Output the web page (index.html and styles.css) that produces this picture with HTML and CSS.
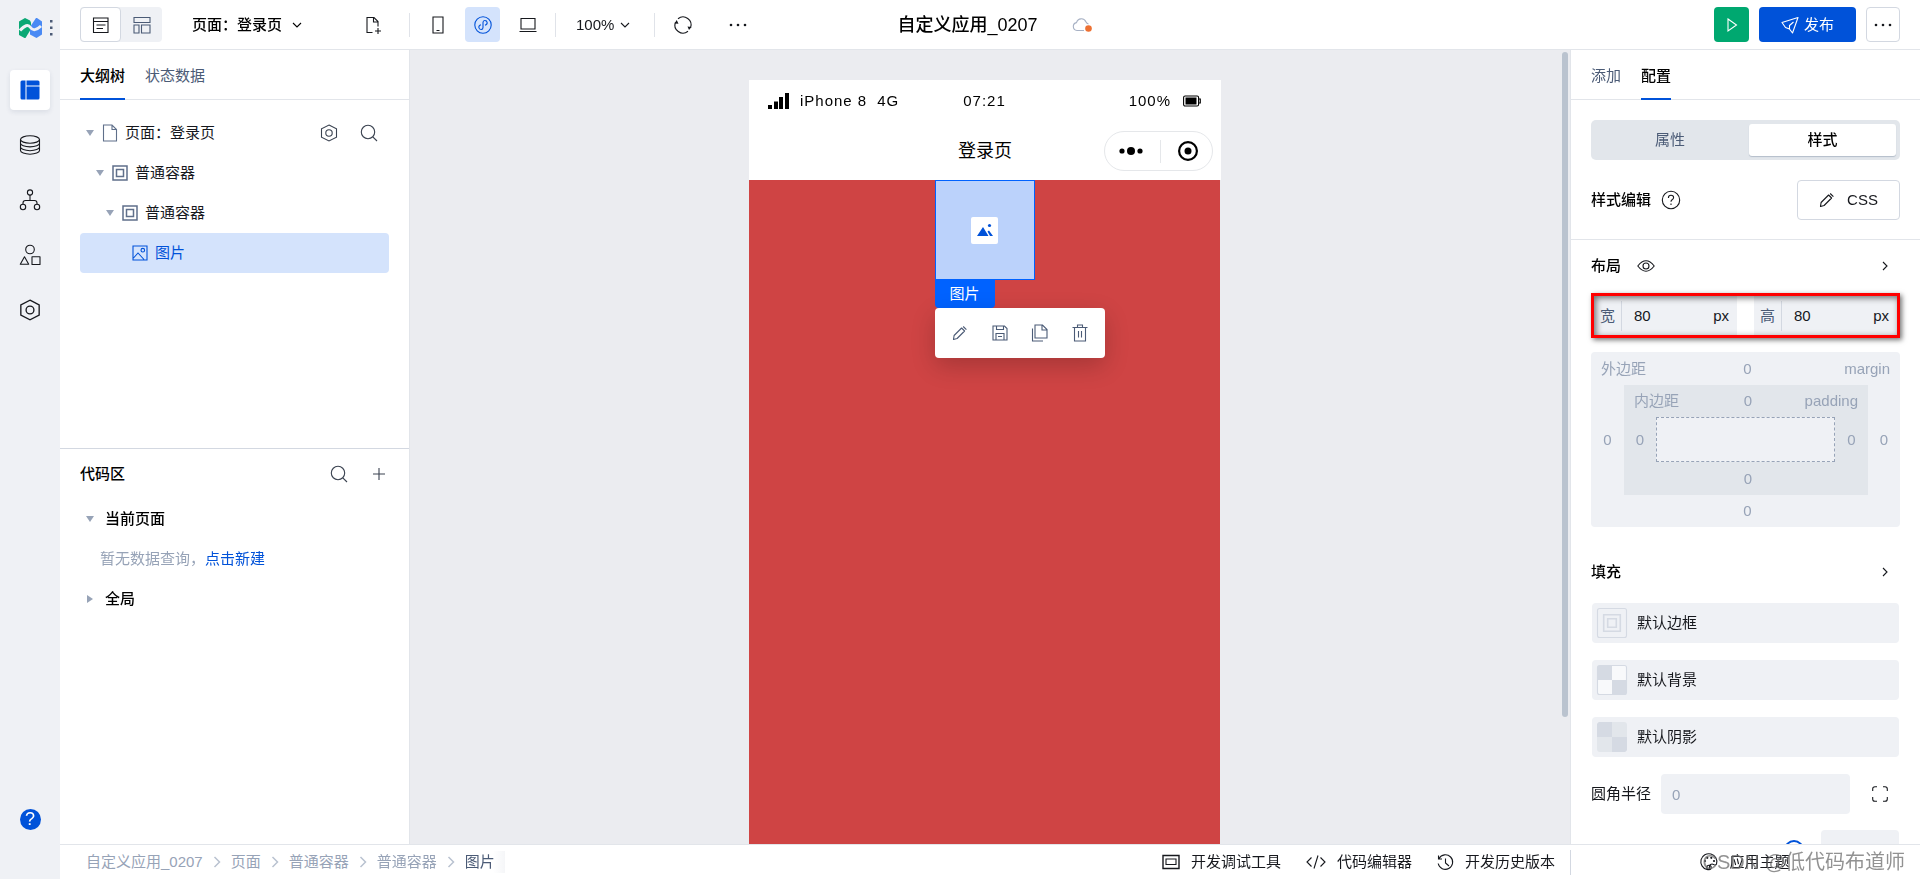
FILE: index.html
```html
<!DOCTYPE html>
<html lang="zh-CN">
<head>
<meta charset="utf-8">
<title>自定义应用_0207</title>
<meta name="viewport" content="width=device-width, initial-scale=1">
<link rel="stylesheet" href="styles.css">
</head>
<body>
<svg class="sprite" aria-hidden="true">
  <symbol id="i-search" viewBox="0 0 18 18"><circle cx="8" cy="8" r="6.700"/><path d="M12.800 12.800 17 17"/></symbol>
  <symbol id="i-hex" viewBox="0 0 18 18"><path d="M9 1 16.500 4.800v8.400L9 17 1.500 13.200V4.800z"/><circle cx="9" cy="9" r="3.200"/></symbol>
  <symbol id="i-down" viewBox="0 0 10 10"><path d="M1 3l4 4 4-4"/></symbol>
  <symbol id="i-right" viewBox="0 0 10 10"><path d="M3 1l4 4-4 4"/></symbol>
  <symbol id="i-crumb" viewBox="0 0 8 12"><path d="M1.500 1l5 5-5 5" stroke-width="1.500"/></symbol>
  <symbol id="i-box" viewBox="0 0 16 16"><path d="M1 1h14v14H1zM4.500 4.500h7v7h-7z" stroke-width="1.500"/></symbol>
  <symbol id="i-edit" viewBox="0 0 16 16"><path d="M1.500 14.500l.6-4L9.600 3l3 3-7.500 7.500zM11.200 1.500l3.200 3.200" stroke-linejoin="round"/></symbol>
  <symbol id="i-dots" viewBox="0 0 18 4"><g fill="currentColor" stroke="none"><circle cx="2" cy="2" r="1.300"/><circle cx="9" cy="2" r="1.300"/><circle cx="16" cy="2" r="1.300"/></g></symbol>
</svg>
<div class="app">
  <nav class="rail" aria-label="主导航">
    <div class="brand">
      <svg width="23" height="20" viewBox="0 0 23 20"><path fill="#0aa874" stroke="none" d="M0 3.500 6 0l5 2.500 1 2V11L6.500 20H5.500L0 17z"/><path fill="#4a8af4" stroke="none" d="M17 0h1l5 3.500v13L17.500 20 11 16.500V9z"/><path stroke="#eff1f5" stroke-width="3" d="M1 12.500Q8 4.500 11.500 9.500T22 8"/></svg>
      <svg width="3" height="16" viewBox="0 0 3 16"><path fill="#4b5b76" stroke="none" d="M0 0h2.500v2.500H0zM0 6.500h2.500V9H0zM0 13h2.500v2.500H0z"/></svg>
    </div>
    <button class="rail-btn is-active" aria-label="页面设计"><svg width="20" height="20" viewBox="0 0 20 20"><path fill="#0052d9" stroke="none" d="M2 .5h3.500v19H2a1.500 1.500 0 0 1-1.500-1.500V2A1.500 1.500 0 0 1 2 .5zM6.500.5H18A1.500 1.500 0 0 1 19.500 2v3.500h-13zM6.500 6.500h13V18a1.500 1.500 0 0 1-1.500 1.500H6.500z"/></svg></button>
    <button class="rail-btn" aria-label="数据源"><svg width="22" height="22" viewBox="0 0 22 22"><ellipse cx="11" cy="5.500" rx="9.500" ry="3.700"/><path d="M1.500 5.500v11c0 2 4.200 3.700 9.500 3.700s9.500-1.700 9.500-3.700v-11M1.500 9.200c0 2 4.200 3.700 9.500 3.700s9.500-1.700 9.500-3.700M1.500 13c0 2 4.200 3.700 9.500 3.700s9.500-1.700 9.500-3.700"/></svg></button>
    <button class="rail-btn" aria-label="流程"><svg width="22" height="22" viewBox="0 0 22 22"><circle cx="11" cy="3.500" r="2.600"/><circle cx="4" cy="18" r="2.700"/><circle cx="18" cy="18" r="2.700"/><path d="M11 6v5.500M4 15.300v-1.300q0-2.500 2.500-2.500h9q2.500 0 2.500 2.500v1.300"/></svg></button>
    <button class="rail-btn" aria-label="组件"><svg width="22" height="22" viewBox="0 0 22 22"><circle cx="11" cy="5.500" r="4.300"/><path d="M5.500 12.800 9.700 20.300H1.300zM13 12.800h8v7.700h-8z" stroke-linejoin="round"/></svg></button>
    <button class="rail-btn" aria-label="设置"><svg width="22" height="22" viewBox="0 0 18 18"><use href="#i-hex"/></svg></button>
    <button class="help" aria-label="帮助">?</button>
  </nav>
  <div class="main">
    <header class="topbar">
      <div class="top-left">
        <div class="views">
          <button class="view is-active" aria-label="编辑视图"><svg width="18" height="18" viewBox="0 0 18 18"><path d="M1.500 2h14.500v14.500H1.500zM1.500 5.500h14.500M4.500 9h9M4.500 12.500h6.500"/></svg></button>
          <button class="view" aria-label="布局视图"><svg width="18" height="18" viewBox="0 0 18 18"><path d="M1 1.500h16v5H1zM1 9h5v8H1zM8.500 9H17v8H8.500z"/></svg></button>
        </div>
        <button class="page-pick">页面：登录页<svg width="10" height="10"><use href="#i-down"/></svg></button>
        <button class="icon-btn new-page" aria-label="新建页面"><svg width="17" height="18" viewBox="0 0 17 18"><path d="M7.500 16.500H2v-15h7l4 4v5M8.500 1.500V6H13M13 12v6M10 15h6"/></svg></button>
        <span class="sep"></span>
        <button class="icon-btn" aria-label="手机"><svg width="12" height="18" viewBox="0 0 12 18"><path d="M1 1h10v16H1zM4.500 14.500h3"/></svg></button>
        <button class="icon-btn is-active" aria-label="小程序"><svg width="18" height="18" viewBox="0 0 18 18"><circle cx="9" cy="9" r="8.200"/><path d="M11 9.200c3.300-.9 2.500-4.700-.2-4.700-1.200 0-1.800.9-1.800 2v5c0 1.100-.6 2-1.800 2-2.700 0-3.500-3.800-.2-4.700"/></svg></button>
        <button class="icon-btn" aria-label="电脑"><svg width="18" height="16" viewBox="0 0 18 16"><path d="M2 1.500h14v10.500H2zM.5 14.500h17"/></svg></button>
        <span class="sep sep-a"></span>
        <button class="zoom">100%<svg width="10" height="10"><use href="#i-down"/></svg></button>
        <span class="sep"></span>
        <button class="icon-btn" aria-label="刷新"><svg width="20" height="20" viewBox="0 0 20 20"><path d="M5 3.700A8 8 0 0 1 17.500 12.800M15 16.300A8 8 0 0 1 2.500 7.200"/><path fill="currentColor" stroke="none" d="M1.500 8.500 3.700 5l1.800 3.800zM14.500 11.500l4 .5-2.500 3z"/></svg></button>
        <button class="icon-btn overflow" aria-label="更多"><svg width="18" height="4"><use href="#i-dots"/></svg></button>
      </div>
      <div class="top-title"><h1>自定义应用_0207</h1><svg width="21" height="16" viewBox="0 0 21 16"><path d="M12 13.500H5A4 4 0 0 1 4.500 5.600 5 5 0 0 1 14 5" stroke="#a7b1c4"/><path d="M14 5q.7 1.500 2.500 2" stroke="#a7b1c4"/><circle cx="16.500" cy="11.500" r="3.300" fill="#ed7133" stroke="none"/></svg></div>
      <div class="top-right">
        <button class="run" aria-label="预览"><svg width="14" height="16" viewBox="0 0 14 16"><path d="M3 2l8.500 6L3 14z"/></svg></button>
        <button class="publish"><svg width="18" height="18" viewBox="0 0 18 18"><path d="M1 6.500 17 1.500 11.500 17 8.500 13 4.500 11.500zM8.500 13v-3.500l4-3.500" stroke-linejoin="round"/></svg>发布</button>
        <button class="more" aria-label="更多操作"><svg width="18" height="4"><use href="#i-dots"/></svg></button>
      </div>
    </header>
    <div class="work">
      <aside class="side">
        <section class="outline">
          <div class="tabs"><button class="tab is-active">大纲树</button><button class="tab">状态数据</button></div>
          <ul class="tree">
            <li class="node"><i class="caret"></i><svg class="slate" width="16" height="18" viewBox="0 0 16 18"><path d="M1.500 1h8.500L14.500 5.500V17h-13zM10 1v4.500h4.500"/></svg><span>页面：登录页</span>
              <button class="tool" aria-label="页面设置"><svg width="18" height="18"><use href="#i-hex"/></svg></button><button class="tool" aria-label="搜索"><svg width="18" height="18"><use href="#i-search"/></svg></button></li>
            <li class="node lv1"><i class="caret"></i><svg class="slate" width="16" height="16"><use href="#i-box"/></svg><span>普通容器</span></li>
            <li class="node lv2"><i class="caret"></i><svg class="slate" width="16" height="16"><use href="#i-box"/></svg><span>普通容器</span></li>
            <li class="node lv3 is-active"><i class="caret blank"></i><svg width="16" height="16" viewBox="0 0 16 16"><path d="M1 1h14v14H1zM1.500 13 6 8l6 6.500"/><circle cx="10.800" cy="5.200" r="1.800"/></svg><span>图片</span></li>
          </ul>
        </section>
        <section class="code">
          <div class="code-head"><h2>代码区</h2><button class="tool" aria-label="搜索代码"><svg width="18" height="18"><use href="#i-search"/></svg></button><button class="tool" aria-label="新建"><svg width="12" height="12" viewBox="0 0 12 12"><path d="M6 0v12M0 6h12"/></svg></button></div>
          <div class="code-row"><i class="caret"></i><b>当前页面</b></div>
          <p class="empty">暂无数据查询，<a href="#new">点击新建</a></p>
          <div class="code-row"><i class="caret closed"></i><b>全局</b></div>
        </section>
      </aside>
      <main class="canvas">
        <div class="phone">
          <div class="status"><div class="carrier"><svg width="22" height="16" viewBox="0 0 22 16"><path fill="currentColor" stroke="none" d="M0 12h4v4H0zM6 8.500h4V16H6zM11 4h4v12h-4zM17 0h4v16h-4z"/></svg><span>iPhone 8</span><span>4G</span></div><span>07:21</span><div class="power"><span>100%</span><svg width="18" height="12" viewBox="0 0 18 12"><rect x=".6" y="1" width="15" height="10" rx="1.500"/><path fill="currentColor" stroke="none" d="M2.500 2.500h11v7h-11z"/><path d="M16 4h1.300v4H16"/></svg></div></div>
          <div class="nav"><span>登录页</span>
            <div class="capsule"><svg width="24" height="8" viewBox="0 0 24 8"><g fill="currentColor" stroke="none"><circle cx="3" cy="4" r="2.600"/><circle cx="12" cy="4" r="4"/><circle cx="21" cy="4" r="2.600"/></g></svg><i></i><svg width="20" height="20" viewBox="0 0 20 20"><circle cx="10" cy="10" r="8.900" stroke-width="2.200"/><circle cx="10" cy="10" r="3.500" fill="currentColor" stroke="none"/></svg></div>
          </div>
          <div class="stage">
            <div class="picked">
              <span class="pic"><svg width="18" height="16" viewBox="0 0 18 16"><path fill="#0052d9" stroke="none" d="M1 14 7 5l5.500 9zM11.500 9.500l1.500-1 4 5.500h-3z"/><circle cx="13.500" cy="3.500" r="1.600" fill="#0052d9" stroke="none"/></svg></span>
              <div class="popup">
                <span class="tag">图片</span>
                <div class="actions">
                  <button aria-label="编辑"><svg width="16" height="16"><use href="#i-edit"/></svg></button>
                  <button aria-label="保存"><svg width="16" height="16" viewBox="0 0 16 16"><path d="M1 1h11.500L15 3.500V15H1zM4.500 1v3.500h7V1M4 15V8.500h8V15M6 11.500h4"/></svg></button>
                  <button aria-label="复制"><svg width="17" height="18" viewBox="0 0 17 18"><path d="M4 1h7.500L16 5.500V14H4zM11 1v5h5M1.500 4.500v12.500H12"/></svg></button>
                  <button aria-label="删除"><svg width="16" height="18" viewBox="0 0 16 18"><path d="M.5 3.500h15M2.500 3.500V17h11V3.500M5.500 3.500V1h5v2.500M6.500 7v6.500M9.500 7v6.500"/></svg></button>
                </div>
              </div>
            </div>
          </div>
        </div>
        <div class="scroll"><i></i></div>
      </main>
      <aside class="props">
        <div class="tabs"><button class="tab">添加</button><button class="tab is-active">配置</button></div>
        <div class="block">
          <div class="segment"><button>属性</button><button class="is-active">样式</button></div>
          <div class="css-row"><h2>样式编辑</h2><svg width="20" height="20" viewBox="0 0 20 20"><circle cx="10" cy="10" r="8.700"/><path d="M7.400 8q0-2.700 2.600-2.700t2.600 2.300q0 1.300-1.500 2.100-1.100.7-1.100 2M10 13.500v1.400"/></svg><button class="css-btn"><svg width="16" height="16"><use href="#i-edit"/></svg>CSS</button></div>
        </div>
        <div class="block style-block">
          <div class="title-row"><h2>布局</h2><svg width="18" height="14" viewBox="0 0 18 14"><path d="M.8 7Q9-3.500 17.200 7 9 17.500.8 7z"/><circle cx="9" cy="7" r="3"/></svg><button class="fold" aria-label="展开布局"><svg width="10" height="10"><use href="#i-right"/></svg></button></div>
          <div class="size-row">
            <div class="field"><label for="w">宽</label><input id="w" value="80"><span>px</span></div>
            <div class="field"><label for="h">高</label><input id="h" value="80"><span>px</span></div>
          </div>
          <div class="margin-box">
            <div class="edge-top"><span>外边距</span><span>0</span><span>margin</span></div>
            <span>0</span>
            <div class="padding-box">
              <div class="edge-top"><span>内边距</span><span>0</span><span>padding</span></div>
              <span>0</span><div class="content-box"></div><span>0</span>
              <span class="edge-bottom">0</span>
            </div>
            <span>0</span>
            <span class="edge-bottom">0</span>
          </div>
          <div class="title-row fill-title"><h2>填充</h2><button class="fold" aria-label="展开填充"><svg width="10" height="10"><use href="#i-right"/></svg></button></div>
          <div class="presets">
            <button class="preset"><svg width="30" height="30" viewBox="0 0 30 30"><rect x=".5" y=".5" width="29" height="29" rx="2" stroke="#d5dae3"/><path d="M6.700 6.700h16.600v16.600H6.700zM10.700 10.700h8.600v8.600h-8.600z" stroke="#d5dae3" stroke-width="1.600"/></svg>默认边框</button>
            <button class="preset"><svg width="30" height="30" viewBox="0 0 30 30"><rect x=".5" y=".5" width="29" height="29" rx="2" fill="#f8f9fb" stroke="#d5dae3"/><path d="M1 1h14v14H1zM15 15h14v14H15z" fill="#d5dae3" stroke="none"/></svg>默认背景</button>
            <button class="preset"><svg width="30" height="30" viewBox="0 0 30 30"><rect width="30" height="30" rx="3" fill="#e2e6eb" stroke="none"/><path d="M2 0h13v15H0V2zM15 15h15v13l-2 2H15z" fill="#d5dae3" stroke="none"/></svg>默认阴影</button>
          </div>
          <div class="radius-row"><label for="r">圆角半径</label><input id="r" placeholder="0"><button class="fold" aria-label="分别设置圆角"><svg width="16" height="16" viewBox="0 0 16 16"><path d="M.7 5V3Q.7.7 3 .7h2M11 .7h2q2.300 0 2.300 2.300v2M15.300 11v2q0 2.300-2.300 2.300h-2M5 15.300H3Q.7 15.300.7 13v-2"/></svg></button></div>
          <div class="opacity-row"><input type="range" aria-label="不透明度" value="100"><input type="text" aria-label="不透明度数值"></div>
        </div>
      </aside>
    </div>
    <footer class="bottom">
      <nav class="crumbs" aria-label="路径"><a href="#app">自定义应用_0207</a><svg width="8" height="12"><use href="#i-crumb"/></svg><a href="#page">页面</a><svg width="8" height="12"><use href="#i-crumb"/></svg><a href="#c1">普通容器</a><svg width="8" height="12"><use href="#i-crumb"/></svg><a href="#c2">普通容器</a><svg width="8" height="12"><use href="#i-crumb"/></svg><a class="here" href="#img">图片</a></nav>
      <div class="dev">
        <button><svg width="18" height="16" viewBox="0 0 18 16"><path d="M1 1.500h16v13H1z" stroke-width="1.400"/><path d="M4 5h10v5.500H4z"/></svg>开发调试工具</button>
        <button><svg width="20" height="14" viewBox="0 0 20 14"><path d="M5.500 2.500 1 7l4.500 4.500M14.500 2.500 19 7l-4.500 4.500M12 .5 8 13.500"/></svg>代码编辑器</button>
        <button><svg width="17" height="17" viewBox="0 0 17 17"><path d="M2 4.500A7.300 7.300 0 1 1 1.200 9.500M1.500 1.500V5H5M8.500 4.500V9l3.500 3"/></svg>开发历史版本</button>
      </div>
      <div class="theme"><button><svg width="17" height="18" viewBox="0 0 17 18"><path d="M6 16.500A8 8 0 1 1 15.500 11c-.7 1.500-2 1-3 .4-2-1-4.500.2-4 2.600.3 1.600-.5 3-2.500 2.500z"/><g fill="currentColor" stroke="none"><circle cx="4" cy="8" r="1.100"/><circle cx="6.300" cy="4.800" r="1.100"/><circle cx="10.300" cy="4.800" r="1.100"/><circle cx="13" cy="8" r="1.100"/></g><circle cx="8" cy="14.500" r="2.200"/></svg>应用主题</button><span class="mark">CSDN @低代码布道师</span></div>
    </footer>
  </div>
</div>
</body>
</html>
```
FILE: styles.css
```css
* { box-sizing: border-box; }
body {
  margin: 0;
  font: 15px/22px "Liberation Sans", "Noto Sans CJK SC", sans-serif;
  color: #16181d;
}
button, input {
  margin: 0;
  padding: 0;
  border: 0;
  background: none;
  font: inherit;
  color: inherit;
}
button { display: flex; align-items: center; justify-content: center; white-space: nowrap; }
svg { flex: none; display: block; fill: none; stroke: currentColor; stroke-width: 1.1; overflow: visible; }
h1, h2, p, ul { margin: 0; padding: 0; }
h2, b { font-size: 15px; font-weight: 500; color: #000; }
a { text-decoration: none; color: inherit; }
.sprite { position: absolute; width: 0; height: 0; }

.app { display: flex; height: 100vh; overflow: hidden; }
.rail {
  flex: none;
  width: 60px;
  background: #eff1f5;
  display: flex;
  flex-direction: column;
  align-items: center;
  gap: 15px;
  padding-bottom: 49px;
}
.brand { height: 55px; width: 100%; display: flex; align-items: center; gap: 8px; padding-left: 19px; }
.rail-btn { width: 40px; height: 40px; border-radius: 4px; }
.rail-btn.is-active { background: #fff; box-shadow: 0 2px 5px rgba(30, 50, 90, .1); }
.help { margin-top: auto; width: 21px; height: 21px; border-radius: 50%; background: #0052d9; color: #fff; font-size: 18px; line-height: 21px; }

.main { flex: 1; min-width: 0; display: flex; flex-direction: column; }
.topbar { flex: none; height: 50px; display: flex; align-items: center; border-bottom: 1px solid #e2e5ea; padding: 0 20px; background: #fff; }
.top-left, .top-right { flex: 1 1 0; display: flex; align-items: center; }
.top-right { justify-content: flex-end; gap: 10px; }
.views { display: flex; background: #eff1f5; border-radius: 4px; color: #4b5b76; }
.view { width: 41px; height: 35px; border-radius: 4px; }
.view.is-active { background: #fff; border: 1px solid #d3d8e1; color: #16181d; }
.page-pick { margin-left: 30px; gap: 10px; font-weight: 500; color: #000; }
.new-page { margin-left: 54px; }
.icon-btn { width: 35px; height: 35px; border-radius: 4px; margin-right: 10px; }
.icon-btn.is-active { background: #d4e3fc; color: #0052d9; }
.sep { width: 1px; height: 24px; margin: 0 10px; background: #e0e3e9; }
.new-page + .sep { margin-left: 8px; }
.sep-a { margin-left: 0; }
.overflow { margin-left: 10px; }
.zoom { padding: 0 14px 0 10px; gap: 6px; }
.top-title { display: flex; align-items: center; gap: 34px; padding-left: 10px; }
.top-title h1 { font-size: 18px; line-height: 26px; font-weight: 500; color: #000; }
.run { width: 35px; height: 35px; border-radius: 4px; background: #00a870; color: #fff; }
.publish { width: 97px; height: 35px; border-radius: 4px; background: #0052d9; color: #fff; gap: 5px; }
.more { width: 34px; height: 35px; border-radius: 4px; border: 1px solid #d3d8e1; }

.work { flex: 1; min-height: 0; display: flex; }
.side { flex: none; width: 350px; border-right: 1px solid #e2e5ea; display: flex; flex-direction: column; background: #fff; }
.tabs { flex: none; display: flex; gap: 20px; height: 50px; padding: 0 20px; border-bottom: 1px solid #e2e5ea; }
.tab { height: 50px; padding-top: 3px; border-bottom: 2px solid transparent; color: #4b5b76; }
.tab.is-active { border-color: #0052d9; color: #000; font-weight: 500; }
.outline { flex: 398 1 0; border-bottom: 1px solid #d3d8e1; }
.code { flex: 396 1 0; }
.tree { list-style: none; padding: 13px 20px; }
.node { height: 40px; display: flex; align-items: center; gap: 7px; padding-left: 5px; border-radius: 4px; }
.node.lv1 { padding-left: 15px; }
.node.lv2 { padding-left: 25px; }
.node.lv3 { padding-left: 35px; }
.node.is-active { background: #d4e3fc; color: #0052d9; }
.node span { margin-right: auto; }
.slate { color: #5f6f8a; }
.caret { width: 10px; display: flex; justify-content: center; }
.caret::before { content: ""; border: 4px solid transparent; border-top: 6px solid #97a3b7; border-bottom: 0; }
.caret.closed::before { border: 4px solid transparent; border-left: 6px solid #97a3b7; border-right: 0; }
.caret.blank::before { display: none; }
.tool { width: 40px; height: 40px; margin-left: -7px; color: #3a4250; }
.code-head { display: flex; align-items: center; height: 50px; padding: 0 10px 0 20px; }
.code-head h2 { margin-right: auto; }
.code-head .tool { margin-left: 0; }
.code-row { height: 40px; display: flex; align-items: center; gap: 10px; padding-left: 25px; }
.empty { padding: 9px 40px; color: #97a3b7; }
.empty a { color: #0052d9; }

.canvas { flex: 1; min-width: 0; display: flex; background: #ebecf0; padding-top: 30px; position: relative; justify-content: center; padding-right: 10px; }
.phone { width: 472px; display: flex; flex-direction: column; }
.status { height: 42px; background: #fff; color: #000; display: grid; grid-template-columns: 1fr auto 1fr; align-items: center; padding: 0 20px 0 19px; letter-spacing: 1px; }
.carrier, .power { display: flex; align-items: center; gap: 10px; }
.power { justify-content: flex-end; gap: 12px; }
.nav { height: 58px; background: #fff; display: flex; align-items: center; justify-content: center; position: relative; font-size: 18px; color: #000; }
.capsule { position: absolute; right: 8px; top: 9px; height: 40px; width: 109px; border: 1px solid #e5e7ea; border-radius: 20px; display: flex; align-items: center; justify-content: space-between; padding: 0 14px; }
.capsule i { width: 1px; height: 23px; background: #e5e7ea; }
.stage { flex: 1; margin-right: 1px; background: #cf4444; display: flex; justify-content: center; align-items: flex-start; }
.picked { position: relative; width: 100px; height: 100px; background: #bbd2fb; border: 1px solid #0062ff; display: flex; align-items: center; justify-content: center; }
.pic { width: 27px; height: 27px; border-radius: 2px; background: #fff; display: flex; align-items: center; justify-content: center; }
.popup { position: absolute; top: 99px; left: -1px; }
.tag { display: flex; align-items: center; justify-content: center; width: 60px; height: 28px; background: #0062ff; color: #fff; border-radius: 0 0 4px 4px; }
.actions { display: flex; width: 170px; height: 50px; padding: 0 5px; background: #fff; border-radius: 4px; color: #4b5b76; box-shadow: 0 8px 24px rgba(0, 0, 0, .2); }
.actions button { flex: 1; }
.scroll { position: absolute; right: 2px; top: 2px; bottom: 0; width: 6px; }
.scroll i { display: block; height: 84%; border-radius: 3px; background: #bac3cf; }

.props { flex: none; width: 350px; border-left: 1px solid #e2e5ea; background: #fff; overflow: hidden; }
.block { padding: 20px 20px 19px; border-bottom: 1px solid #e2e5ea; }
.segment { height: 40px; padding: 4px 4px 4px 0; display: grid; grid-template-columns: 158fr 147fr; background: #e2e6eb; border-radius: 5px; color: #4b5b76; }
.segment .is-active { background: #fff; color: #000; font-weight: 500; border-radius: 3px; box-shadow: 0 1px 1px #b4bdca; }
.segment button { height: 32px; }
.css-row { display: flex; align-items: center; height: 40px; gap: 10px; margin-top: 20px; }
.css-btn { margin-left: auto; height: 40px; width: 103px; gap: 12px; border: 1px solid #d3d8e1; border-radius: 4px; }
.style-block { padding-top: 15px; border: 0; }
.title-row { display: flex; align-items: center; gap: 16px; height: 22px; }
.fold { margin-left: auto; width: 30px; height: 30px; }
.size-row { display: flex; gap: 17px; height: 45px; margin-top: 16px; border: 3px solid #f00; box-shadow: 2px 2px 5px rgba(0, 0, 0, .55), inset 2px 2px 6px rgba(0, 0, 0, .55); }
.field { flex: 1; display: flex; align-items: center; padding: 0 8px 0 6px; background: #eff1f5; mix-blend-mode: multiply; }
.field label { color: #4b5b76; padding-right: 6px; line-height: 30px; border-right: 1px solid #d3d8e1; }
.field input { flex: 1; width: 0; min-width: 0; padding-left: 12px; }
.margin-box { margin-top: 14px; display: grid; grid-template: 33px 110px 32px / 33px 1fr 32px; background: #eff1f5; border-radius: 4px; color: #97a3b7; align-items: center; justify-items: center; }
.padding-box { width: 100%; height: 100%; display: grid; grid-template: 32px 45px 33px / 32px 1fr 33px; background: #e2e6eb; align-items: center; justify-items: center; }
.edge-top { grid-column: 1 / -1; width: 100%; padding: 0 10px; display: grid; grid-template-columns: 1fr auto 1fr; }
.edge-top span:last-child { text-align: right; }
.edge-top span:nth-child(2), .edge-bottom { padding-left: 4px; }
.edge-bottom { grid-column: 1 / -1; }
.content-box { width: 100%; height: 100%; background: #eff1f5; border: 1px dashed #97a3b7; }
.fill-title { margin: 34px 0 20px; }
.presets { display: flex; flex-direction: column; gap: 17px; padding: 0 1px; }
.preset { justify-content: flex-start; height: 40px; padding-left: 5px; gap: 10px; border-radius: 4px; background: #eff1f5; }
.radius-row { display: flex; align-items: center; gap: 10px; margin-top: 17px; }
.radius-row label { white-space: nowrap; }
.radius-row input { flex: 1; min-width: 0; height: 40px; padding: 0 11px; border-radius: 4px; background: #eff1f5; }
.radius-row input::placeholder { color: #97a3b7; opacity: 1; }
.radius-row .fold { margin: 0 5px; }
.opacity-row { display: flex; justify-content: flex-end; gap: 17px; margin-top: 16px; padding-right: 1px; }
.opacity-row input[type="text"] { width: 78px; height: 40px; border-radius: 4px; background: #eff1f5; }
.opacity-row input[type="range"] { appearance: none; width: 160px; height: 20px; margin-top: 10px; }
.opacity-row input[type="range"]::-webkit-slider-thumb { appearance: none; width: 20px; height: 20px; border-radius: 50%; border: 2px solid #0052d9; background: #fff; }

.bottom { flex: none; height: 35px; display: flex; align-items: center; border-top: 1px solid #e2e5ea; background: #fff; }
.crumbs { flex: 1; display: flex; align-items: center; gap: 10px; padding-left: 26px; color: #97a3b7; }
.crumbs svg { color: #b9c2d0; }
.crumbs .here { color: #4b5b76; padding-right: 10px; background: linear-gradient(90deg, #fff 70%, #f5f6f8); }
.dev { display: flex; gap: 25px; padding-right: 15px; }
.dev button, .theme button { gap: 11px; }
.theme { position: relative; flex: none; width: 350px; height: 25px; border-left: 1px solid #d3d8e1; display: flex; align-items: center; justify-content: center; }
.mark { position: absolute; right: 15px; top: -1px; font-size: 20px; line-height: 26px; color: rgba(110, 110, 110, .75); white-space: nowrap; }
```
